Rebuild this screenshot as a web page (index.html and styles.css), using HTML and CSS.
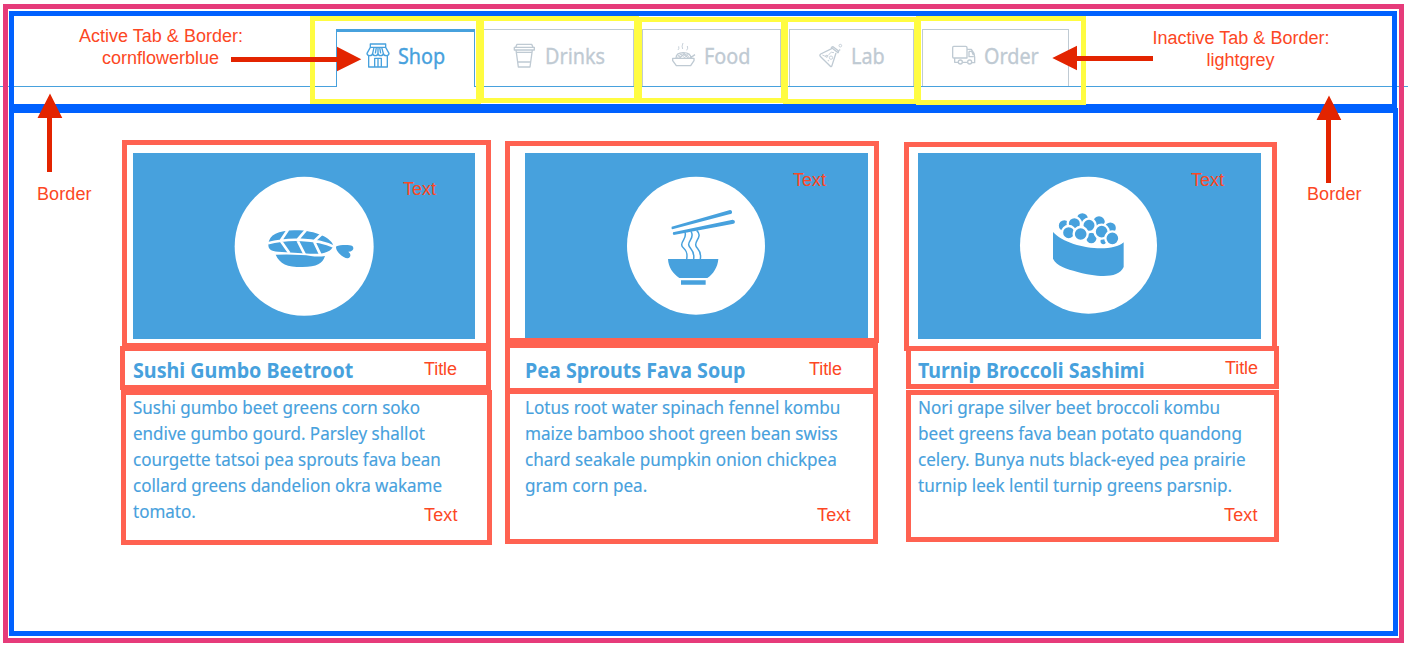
FILE: index.html
```html
<!DOCTYPE html>
<html lang="en">
<head>
<meta charset="utf-8">
<title>Shop</title>
<link rel="stylesheet" href="styles.css">
</head>
<body>
<nav class="tabs">
  <a class="tab tab-shop active">
    <svg class="icon" viewBox="196 127 72 78"><path d="M209 133h46v10h-46zM209 143l-10 18q0 7 8 7t9-7q1 7 8 7t8-7q1 7 8 7t8-7q1 7 9 7t8-7l-10-18M216 161l4-18M224 161l3-18M232 161v-18M240 161l-3-18M248 161l-5-18M204 168v34h56v-34M222 202v-26h20v26M232 176v26"/></svg>
    <span class="label">Shop</span>
  </a>
  <a class="tab tab-drinks">
    <svg class="icon" viewBox="639 127 72 78"><path d="M651 134h44l4 9h-52zM643 143h60v8h-60zM648 151l7 51h35l7-51M650 158h46M653 187h39"/></svg>
    <span class="label">Drinks</span>
  </a>
  <a class="tab tab-food">
    <svg class="icon" viewBox="126 127 72 78"><path d="M128 176h64v7l-10 15h-43l-11-15zM138 176q0-17 22-17t23 17M195 165l-16 11"/><path class="fine" d="M143 175q2-12 17-12t18 12M148 175q2-8 12-8t13 8M143 166l12 10M150 161l15 15M159 159l16 16M175 163l-13 13M165 160l-16 16M144 151q4-4 2-11M158 148q-4-8 1-18M170 152q5-6 2-13"/></svg>
    <span class="label">Food</span>
  </a>
  <a class="tab tab-lab">
    <svg class="icon" viewBox="567 127 72 78"><path d="M603 143l22 17M605 147l-33 16q-5 4 0 8l29 29q4 2 5-3l12-37M604 143l5-2 17 13-2 6"/><path class="fine" d="M577 166q14 8 20-2t15-5"/><circle class="fine" cx="590" cy="170" r="3"/><circle class="fine" cx="603" cy="174" r="5"/><circle class="fine" cx="595" cy="183" r="1"/><circle class="fine" cx="631" cy="138" r="4"/><circle class="fine" cx="629" cy="151" r="1.5"/></svg>
    <span class="label">Lab</span>
  </a>
  <a class="tab tab-order">
    <svg class="icon" viewBox="156 127 72 78"><path d="M161 140h36q4 0 4 4v31h-40q-3 0-3-4v-27q0-4 3-4zM202 149h12l8 12 2 12v16h-8M164 175v13h10M188 188h13M207 155v16h14M207 155h8l5 11"/><circle cx="181" cy="187" r="6"/><circle cx="209" cy="187" r="6"/></svg>
    <span class="label">Order</span>
  </a>
</nav>

<main class="cards">
  <article class="card">
    <svg class="art" viewBox="69 69 1026 558">
      <circle class="plate" cx="582.5" cy="349" r="208.5"/>
      <path d="M497 374Q569 372 602 378Q625 381 645 378C637 401 622 411 577 411C530 411 510 402 497 374z"/>
      <path d="M475 344C477 313 505 302 553 301C617 300 665 325 670 347C665 365 638 374 600 371L504 365C483 363 475 358 475 344z"/>
      <path class="seam" d="M474 340C530 324 620 325 671 350M534 299L512 332L538 369M589 299L562 330L584 373M639 308L612 334L631 374"/>
      <path d="M679 349C690 344 718 343 727 348C733 353 731 365 715 365C725 373 722 382 713 385C702 386 678 366 678 352z"/>
    </svg>
    <h2 class="title title-1">Sushi Gumbo Beetroot</h2>
    <p class="text text-1">Sushi gumbo beet greens corn soko<br>endive gumbo gourd. Parsley shallot<br>courgette tatsoi pea sprouts fava bean<br>collard greens dandelion okra wakame<br>tomato.</p>
  </article>
  <article class="card">
    <svg class="art" viewBox="75 69 1029 558">
      <circle class="plate" cx="588" cy="347" r="207"/>
      <path d="M515 290L690 240Q697 240 696 249Q694 253 688 253L517 298Q513 296 515 290zM519 307L698 269Q705 270 705 276Q704 282 697 282L521 315Q517 312 519 307z"/>
      <path class="noodle" d="M555 307C561 325 545 331 545 344C545 357 566 355 560 387M573 304C585 323 565 331 566 344C567 357 585 357 581 387M590 301C608 318 587 330 587 344C587 357 606 357 601 387"/>
      <path d="M504 387H655C653 412 640 432 622 444H538C519 431 505 412 504 387zM543 451H617V464H543z"/>
    </svg>
    <h2 class="title title-2">Pea Sprouts Fava Soup</h2>
    <p class="text text-2">Lotus root water spinach fennel kombu<br>maize bamboo shoot green bean swiss<br>chard seakale pumpkin onion chickpea<br>gram corn pea.</p>
  </article>
  <article class="card">
    <svg class="art" viewBox="84 69 1029 558">
      <circle class="plate" cx="595.5" cy="345.5" r="205.5"/>
      <g class="roe">
        <circle cx="577" cy="266" r="20"/><circle cx="627" cy="276" r="21"/><circle cx="661" cy="294" r="20"/><circle cx="523" cy="287" r="20"/>
        <circle cx="553" cy="281" r="20"/><circle cx="604" cy="324" r="19"/><circle cx="597" cy="286" r="20"/><circle cx="640" cy="334" r="12"/>
        <circle cx="635" cy="305" r="21"/><circle cx="536" cy="308" r="20"/><circle cx="572" cy="312" r="21"/>
      </g>
      <path class="mask" d="M482 296C520 344 645 370 705 331L700 365H482z"/>
      <path d="M489 306C530 353 662 372 701 337V411C690 436 658 440 622 437C580 433 541 421 519 412C504 405 494 396 489 386z"/>
      <circle class="roe" cx="667" cy="325" r="21"/>
    </svg>
    <h2 class="title title-3">Turnip Broccoli Sashimi</h2>
    <p class="text text-3">Nori grape silver beet broccoli kombu<br>beet greens fava bean potato quandong<br>celery. Bunya nuts black-eyed pea prairie<br>turnip leek lentil turnip greens parsnip.</p>
  </article>
</main>

<!-- Annotation layer: outlines, arrows and notes over the layout -->
<svg class="notes" viewBox="0 0 1408 657">
  <g class="frame">
    <rect class="pink" x="5.5" y="6.5" width="1396" height="634"/>
    <g class="yellow">
      <rect x="312.5" y="18.5" width="166" height="83"/>
      <rect x="481.5" y="18.5" width="155" height="82"/>
      <rect x="639.5" y="19.5" width="144" height="81"/>
      <rect x="785.5" y="19.5" width="131" height="82"/>
    </g>
    <g class="blue">
      <rect x="11.5" y="13.5" width="1383" height="93"/>
      <rect x="11.5" y="110.5" width="1384" height="523"/>
    </g>
    <rect class="yellow" x="918.5" y="18.5" width="165" height="84"/>
    <g class="tomato">
      <rect x="124.5" y="142.5" width="364" height="203"/>
      <rect x="122.5" y="348.5" width="366" height="39"/>
      <rect x="123.5" y="392.5" width="366" height="150"/>
      <rect x="507.5" y="143.5" width="369" height="197"/>
      <rect x="507.5" y="345.5" width="368" height="45"/>
      <rect x="507.5" y="391.5" width="368" height="150"/>
      <rect x="906.5" y="144.5" width="368" height="204"/>
      <rect x="908.5" y="348.5" width="368" height="38"/>
      <rect x="908.5" y="392.5" width="368" height="147"/>
    </g>
  </g>
  <g class="arrow">
    <path d="M231 57H337V46.7L361.3 59.3L337 71.3V62H231z"/>
    <path d="M1153 56H1077V45.7L1052.3 58L1077 70.3V61H1153z"/>
    <path d="M47 172V118H37.5L50 93.5L62.3 118H52V172z"/>
    <path d="M1326 183V120H1316.5L1329 95.5L1341.3 120H1331V183z"/>
  </g>
  <g class="note">
    <text x="79" y="42" textLength="164">Active Tab &amp; Border:</text>
    <text x="102" y="64" textLength="117">cornflowerblue</text>
    <text x="1152.5" y="44" textLength="177">Inactive Tab &amp; Border:</text>
    <text x="1206.5" y="66" textLength="68">lightgrey</text>
    <text x="37" y="200" textLength="54.5">Border</text>
    <text x="1307" y="200" textLength="54.5">Border</text>
    <text x="403" y="195" textLength="33">Text</text>
    <text x="793" y="186" textLength="33">Text</text>
    <text x="1191" y="186" textLength="33">Text</text>
    <text x="424" y="375" textLength="33">Title</text>
    <text x="809" y="375" textLength="33">Title</text>
    <text x="1225" y="374" textLength="33">Title</text>
    <text x="424" y="521" textLength="33.5">Text</text>
    <text x="817" y="521" textLength="33.5">Text</text>
    <text x="1224" y="521" textLength="33.5">Text</text>
  </g>
</svg>
</body>
</html>
```

FILE: styles.css
```css
* { box-sizing: border-box; }

body {
  margin: 0;
  height: 657px;
  overflow: hidden;
  position: relative;
  background: #fff;
  color: #47a1dd;
  font-family: "Noto Sans", sans-serif;
}

.tabs {
  display: flex;
  align-items: flex-end;
  gap: 8px;
  height: 87px;
  padding-left: 336px;
  border-bottom: 1px solid #47a1dd;
}

.tab {
  display: flex;
  gap: 8px;
  height: 57px;
  padding: 12px 0 0 29px;
  border: 1px solid #bfcad3;
  border-bottom: 0;
  color: #bfcad3;
}

.tab.active {
  height: 58px;
  margin-bottom: -1px;
  padding-top: 10px;
  border-color: #47a1dd;
  border-top-width: 3px;
  background: #fff;
  color: #47a1dd;
}

.tab-shop { width: 139px; }
.tab-drinks { width: 151px; }
.tab-food { width: 139px; }
.tab-lab { width: 125px; }
.tab-order { width: 147px; }

.icon {
  flex: none;
  width: 24px;
  height: 26px;
  fill: none;
  stroke: currentColor;
  stroke-width: 4;
  stroke-linejoin: round;
}

.icon .fine { stroke-width: 2.6; }

.label {
  font-size: 22px;
  line-height: 26px;
  -webkit-text-stroke: 0.35px currentColor;
  transform: scaleX(0.9);
  transform-origin: 0 0;
}

.cards {
  display: grid;
  grid-template-columns: 342px 343px 343px;
  column-gap: 50px;
  padding: 66px 0 0 133px;
}

.art {
  display: block;
  width: 100%;
  height: 186px;
  background: #47a1dd;
  fill: #47a1dd;
}

.plate, .mask { fill: #fff; }
.seam { fill: none; stroke: #fff; stroke-width: 8; }
.noodle { fill: none; stroke: #47a1dd; stroke-width: 4.5; }
.roe { stroke: #fff; stroke-width: 7; }

.title, .text {
  margin: 0;
  white-space: nowrap;
  transform-origin: 0 0;
}

.title {
  margin-top: 17px;
  font-size: 21px;
  line-height: 28px;
  font-weight: 700;
}

.text {
  margin-top: 10px;
  font-size: 18px;
  line-height: 26px;
  -webkit-text-stroke: 0.15px currentColor;
}

.title-1, .title-2 { transform: scaleX(0.938); }
.title-3 { transform: scaleX(0.933); }
.text-1 { transform: scaleX(0.944); }
.text-2, .text-3 { transform: scaleX(0.95); }

.notes {
  position: absolute;
  inset: 0;
  width: 1408px;
  height: 657px;
}

.frame { fill: none; stroke-width: 5; }
.pink { stroke: #e63b7a; }
.blue { stroke: #0061ff; }
.yellow { stroke: #fffc41; }
.tomato { stroke: #ff6251; }
.arrow { fill: #e32400; }

.note {
  fill: #fc4724;
  font-family: "Liberation Sans", sans-serif;
  font-size: 18px;
}
```
